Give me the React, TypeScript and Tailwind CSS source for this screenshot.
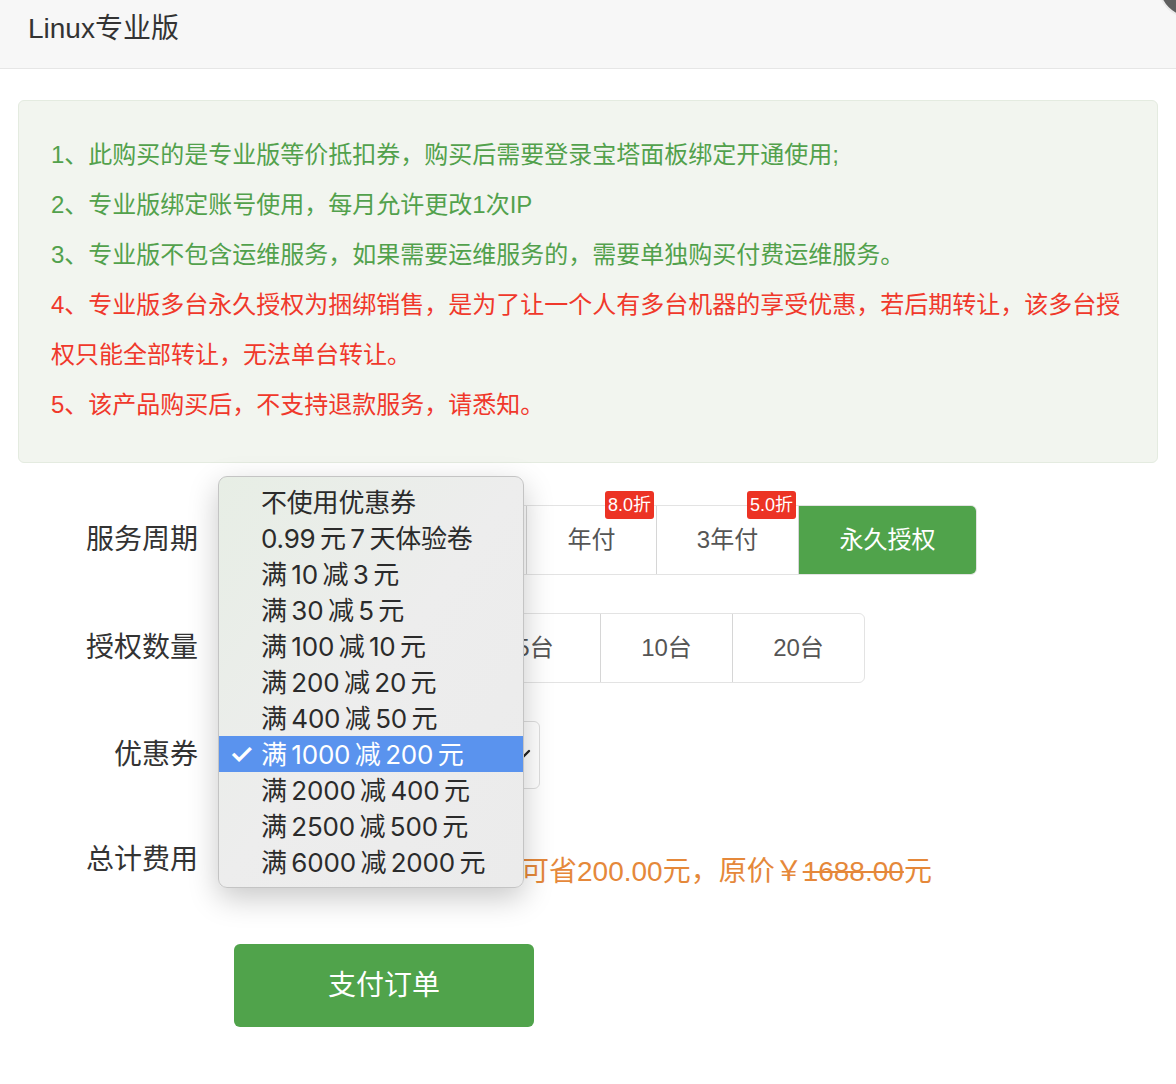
// Purchase dialog for the Linux pro edition, shown with the coupon <select>
// popped open (native-style menu drawn over the form).

const PERIODS = [
  { label: "1个月", w: "w-[145px]" },
  { label: "半年付", w: "w-[146px]" },
  { label: "年付", w: "w-[130px]", badge: "8.0折" },
  { label: "3年付", w: "w-[142px]", badge: "5.0折" },
  { label: "永久授权", w: "w-[178px]", active: true },
];

const COUNTS = [
  { label: "1台", w: "w-[117px]" },
  { label: "3台", w: "w-[117px]" },
  { label: "5台", w: "w-[131px]" },
  { label: "10台", w: "w-[132px]" },
  { label: "20台", w: "w-[132px]" },
];

const COUPONS = [
  "不使用优惠券",
  "0.99元7天体验卷",
  "满10减3元",
  "满30减5元",
  "满100减10元",
  "满200减20元",
  "满400减50元",
  "满1000减200元",
  "满2000减400元",
  "满2500减500元",
  "满6000减2000元",
];
const SELECTED = 7;

// macOS menus put a hair of space between CJK glyphs and digits.
function spaced(t: string) {
  return t
    .replace(/([\u4e00-\u9fa5])(\d)/g, "$1\u2009$2")
    .replace(/(\d)([\u4e00-\u9fa5])/g, "$1\u2009$2");
}

type Seg = { label: string; w: string; badge?: string; active?: boolean };

function Segmented({ items }: { items: Seg[] }) {
  return (
    <div className="flex h-[70px] rounded-[6px] border border-[#e3e3e3]">
      {items.map((s, i) => (
        <div
          key={s.label}
          className={`relative flex items-center justify-center text-[24px] ${s.w} ${
            i > 0 ? "border-l border-[#d6d6d6]" : ""
          } ${s.active ? "rounded-r-[5px] bg-[#50a34b] text-white" : "text-[#555]"}`}
        >
          {s.label}
          {s.badge && (
            <span className="absolute right-[2px] top-[-15px] h-[28px] rounded-[3px] bg-[#ec3324] px-[3px] text-[18px] leading-[28px] text-white">
              {s.badge}
            </span>
          )}
        </div>
      ))}
    </div>
  );
}

function Label({ children }: { children: React.ReactNode }) {
  return <div className="w-[198px] shrink-0 text-right text-[28px] text-[#333]">{children}</div>;
}

export default function App() {
  return (
    <div className="relative min-h-[1084px] w-full overflow-hidden bg-white font-['Liberation_Sans','Noto_Sans_CJK_SC',sans-serif]">
      {/* header */}
      <div className="flex h-[69px] items-center border-b border-[#e6e6e6] bg-[#f7f7f7] pb-[10px] pl-[28px] text-[28px] text-[#333]">
        Linux专业版
      </div>
      <div className="absolute right-[-46px] top-[-46px] h-[64px] w-[64px] rounded-full border-2 border-[#eaeaea] bg-[#5f5f5f]" />

      {/* notice */}
      <div className="px-[18px] pt-[31px]">
        <div className="rounded-[6px] border border-[#e4ebe0] bg-[#f2f5ef] pb-[32px] pl-[32px] pt-[29px] text-[24px] leading-[50px]">
          <p className="whitespace-nowrap text-[#52a14c]">
            1、此购买的是专业版等价抵扣券，购买后需要登录宝塔面板绑定开通使用;
          </p>
          <p className="whitespace-nowrap text-[#52a14c]">2、专业版绑定账号使用，每月允许更改1次IP</p>
          <p className="whitespace-nowrap text-[#52a14c]">
            3、专业版不包含运维服务，如果需要运维服务的，需要单独购买付费运维服务。
          </p>
          <p className="whitespace-nowrap text-[#f0382b]">
            4、专业版多台永久授权为捆绑销售，是为了让一个人有多台机器的享受优惠，若后期转让，该多台授
            <br />
            权只能全部转让，无法单台转让。
          </p>
          <p className="whitespace-nowrap text-[#f0382b]">5、该产品购买后，不支持退款服务，请悉知。</p>
        </div>
      </div>

      {/* form */}
      <div className="relative flex flex-col">
        <div className="mt-[42px] flex items-center">
          <Label>服务周期</Label>
          <div className="ml-[36px]">
            <Segmented items={PERIODS} />
          </div>
        </div>

        <div className="mt-[38px] flex items-center">
          <Label>授权数量</Label>
          <div className="ml-[36px]">
            <Segmented items={COUNTS} />
          </div>
        </div>

        <div className="mt-[38px] flex items-center">
          <Label>优惠券</Label>
          <div className="ml-[36px] flex h-[68px] w-[306px] items-center justify-between rounded-[6px] border border-[#dedede] pl-[14px] pr-[8px] text-[24px] text-[#333]">
            <span>满1000减200元</span>
            <svg width="20" height="12" viewBox="0 0 20 12" fill="none">
              <path d="M2 2l8 8 8-8" stroke="#222" strokeWidth="2.4" strokeLinecap="round" strokeLinejoin="round" />
            </svg>
          </div>
        </div>

        <div className="mt-[36px] flex h-[70px] items-center">
          <Label>总计费用</Label>
          <div className="ml-[36px] flex items-baseline pt-[18px] text-[28px] text-[#e5883a]">
            <span className="inline-block w-[287px] text-[36px] font-bold">¥1488.00元，</span>
            <span>可省200.00元，原价￥</span>
            <span className="line-through">1688.00</span>
            <span>元</span>
          </div>
        </div>

        <button className="ml-[234px] mt-[49px] flex h-[83px] w-[300px] items-center justify-center rounded-[6px] bg-[#50a34b] text-[28px] text-white">
          支付订单
        </button>

        {/* open coupon menu */}
        <div className="absolute left-[218px] top-[13px] h-[412px] w-[306px] rounded-[9px] border border-[#c4c4c4] bg-gradient-to-br from-[#e7eee5] via-[#ededed] to-[#ebebeb] pb-[9px] pt-[7px] font-['Inter','Noto_Sans_CJK_SC',sans-serif] shadow-[0_10px_30px_rgba(0,0,0,0.22)]">
          {COUPONS.map((c, i) => (
            <div
              key={c}
              className={`flex h-[36px] items-center text-[26px] tracking-[-0.2px] ${
                i === SELECTED ? "bg-[#5a93ee] text-white" : "text-[#2b2b2b]"
              }`}
            >
              <span className="w-[42px] shrink-0 pl-[10px] text-[28px] font-semibold">
                {i === SELECTED ? "✓" : ""}
              </span>
              <span className="whitespace-nowrap">{spaced(c)}</span>
            </div>
          ))}
        </div>
      </div>
    </div>
  );
}
